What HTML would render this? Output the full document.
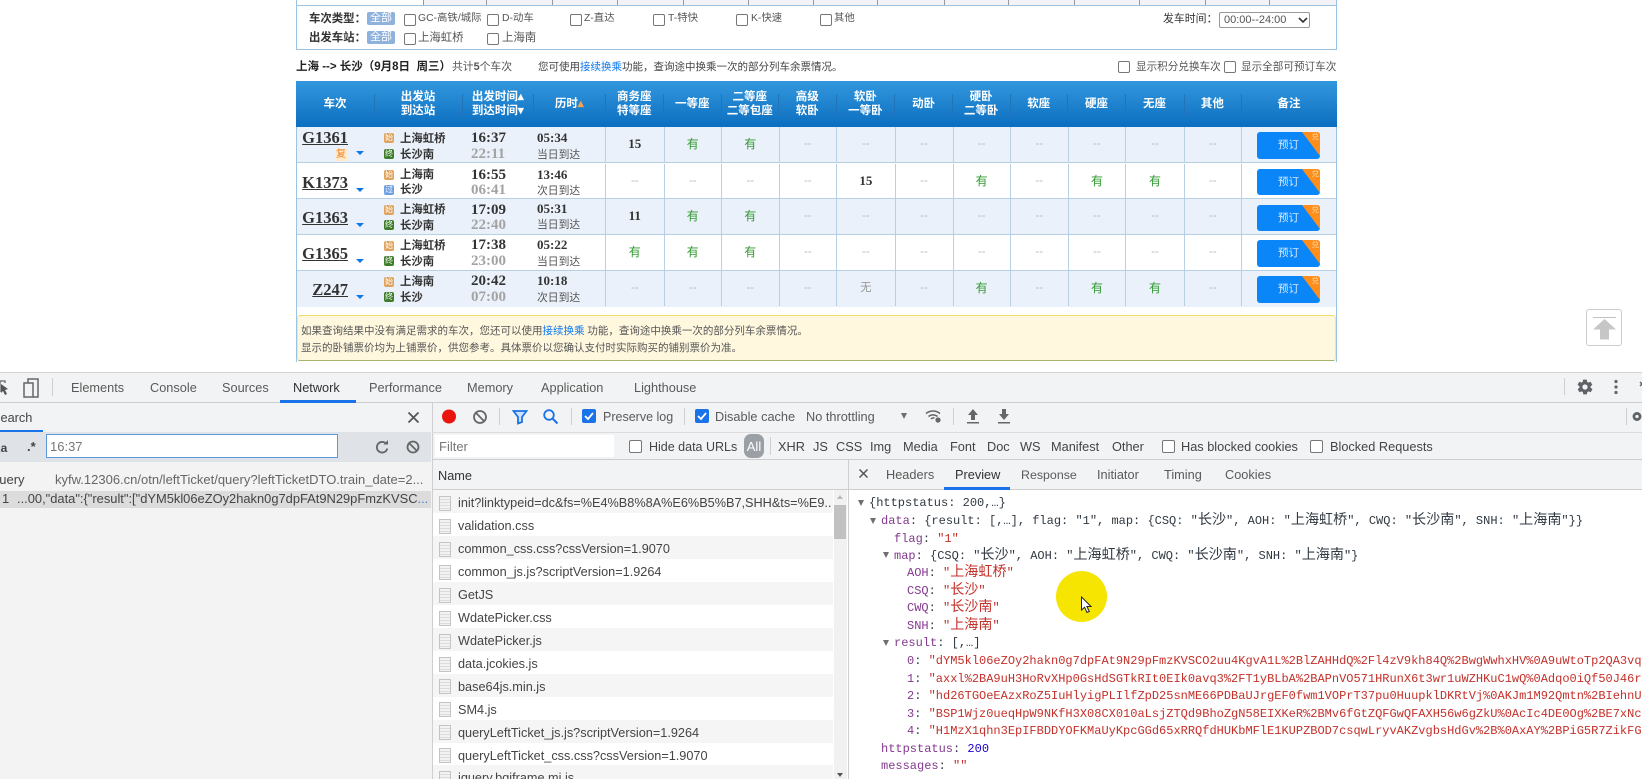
<!DOCTYPE html>
<html lang="zh-CN">
<head>
<meta charset="utf-8">
<title>12306 DevTools</title>
<style>
html,body{margin:0;padding:0;width:1642px;height:779px;overflow:hidden;background:#fff}
#w{position:relative;width:1642px;height:779px;overflow:hidden;filter:blur(.3px);font-family:"Liberation Sans","Noto Sans CJK SC",sans-serif;font-size:13px;color:#333}
#w div,#w span.t,#w svg.a{position:absolute}
.t{position:absolute;white-space:nowrap;line-height:16px}
.p{font-size:10.5px;color:#555}
.b{font-weight:bold;color:#333}
.cb{position:absolute;width:10px;height:10px;border:1px solid #777;border-radius:2px;background:#fff;box-sizing:content-box}
.tag{position:absolute;left:367px;width:28px;height:13px;line-height:13px;background:#8fb2dd;color:#fff;font-size:11px;text-align:center;border-radius:2px}
.h{top:81px;height:46px;color:#fff;font-weight:bold;font-size:11.5px;line-height:14px;text-align:center;display:flex;align-items:center;justify-content:center}
.s{top:94px;width:1px;height:21px;background:#2274b8}
.r{left:296px;width:1041px;height:35.7px;box-sizing:border-box;border-bottom:1px solid #b8d0e4}
.z{background:#ebf1fa}
.n{font:bold 16.5px/20px "Liberation Serif",serif;text-decoration:underline;color:#333;right:989px;top:9px;white-space:nowrap}
.tr{left:60px;top:24px;width:0;height:0;border-left:4px solid transparent;border-right:4px solid transparent;border-top:4.5px solid #0a78e0}
.ic{left:88px;width:10px;height:10px;border-radius:2px;color:#fff;font-size:8px;line-height:10px;text-align:center}
.o{background:#dfa35e}.g{background:#3f7d2c}.u{background:#6e9fe2}
.st{left:104px;font-size:11.4px;font-weight:bold;color:#333;white-space:nowrap;line-height:16px}
.tm{left:175px;font:bold 15px/16px "Liberation Serif",serif;color:#333}
.ar{color:#a3a3a3}
.du{left:241px;top:3px;font:bold 13px/16px "Liberation Serif",serif;color:#333}
.da{left:241px;top:19.5px;font-size:10.8px;line-height:16px;color:#555;white-space:nowrap}
.c{top:0;height:34.7px;line-height:34.7px;text-align:center;border-left:1px solid #b8d0e4;box-sizing:border-box;font-size:11.5px;color:#bbb}
.c1{left:309px;width:58.6px}.c2{left:367.6px;width:57.4px}.c3{left:425px;width:57.6px}.c4{left:482.6px;width:57.4px}.c5{left:540px;width:58.7px}.c6{left:598.7px;width:57.8px}.c7{left:656.5px;width:57.3px}.c8{left:713.8px;width:57.8px}.c9{left:771.6px;width:57.8px}.c10{left:829.4px;width:58.3px}.c11{left:887.7px;width:57.3px}.c12{left:945px;width:96px}
.y{color:#2f9a2f;font-size:12px}
.v{color:#333;font:bold 13px/34.7px "Liberation Serif",serif}
.btn{left:15px;top:5.3px;width:63px;height:26.4px;background:#0a86f8;border-radius:3px;color:#d8ebff;font-size:10.5px;line-height:27px;text-align:center;overflow:hidden}
.tri{right:0;top:0;width:0;height:0;border-top:24px solid #ff8f1a;border-left:18px solid transparent}
.dui{right:1px;top:-1px;font-size:7.5px;line-height:11px;color:#ffd9a8}
.d{color:#5a5a5a;font-size:12.75px}
.ln{height:1px;background:#cdcdcd}
.vs{width:1px;background:#cfcfcf}
.row{left:433px;width:400px;height:23px}
.gr{background:#f5f5f5}
.doc{left:439px;width:10px;height:13px;border:1px solid #c4c4c4;background:repeating-linear-gradient(#f2f2f2 0 2px,#dcdcdc 2px 3px)}
.nm{left:458px;color:#444;font-size:12.7px;white-space:nowrap;line-height:16px;overflow:hidden}
#pv{font:12px/17.6px "Liberation Mono",monospace;color:#303942}
#pv .l{white-space:nowrap;height:18px;line-height:18px;width:800px;overflow:hidden}
.k{color:#84398f}.q{color:#c4302a}.m{color:#1c00cf}
.j{font:14.1px/1 "Noto Sans CJK SC",sans-serif}
.ti{width:0;height:0;border-left:3.5px solid transparent;border-right:3.5px solid transparent;border-top:6px solid #6e6e6e}
</style>
</head>
<body>
<div id="w">

<!-- top filter -->
<div style="left:423px;top:0;width:914px;height:5px;background:#f1f3f6"></div>
<div class="vs" style="left:423px;top:0;height:5px;background:#999"></div>
<div class="vs" style="left:486px;top:0;height:5px;background:#999"></div>
<div class="vs" style="left:552px;top:0;height:5px;background:#999"></div>
<div class="vs" style="left:617px;top:0;height:5px;background:#999"></div>
<div class="vs" style="left:683px;top:0;height:5px;background:#999"></div>
<div class="vs" style="left:748px;top:0;height:5px;background:#999"></div>
<div class="vs" style="left:813px;top:0;height:5px;background:#999"></div>
<div class="vs" style="left:877px;top:0;height:5px;background:#999"></div>
<div class="vs" style="left:944px;top:0;height:5px;background:#999"></div>
<div class="vs" style="left:1008px;top:0;height:5px;background:#999"></div>
<div class="vs" style="left:1074px;top:0;height:5px;background:#999"></div>
<div class="vs" style="left:1139px;top:0;height:5px;background:#999"></div>
<div class="vs" style="left:1205px;top:0;height:5px;background:#999"></div>
<div class="vs" style="left:1269px;top:0;height:5px;background:#999"></div>
<div style="left:296px;top:5px;width:1041px;height:45px;box-sizing:border-box;border:1px solid #9cc3e2;background:#fff"></div>
<div style="left:296px;top:0;width:1px;height:6px;background:#9cc3e2"></div>
<div style="left:1336px;top:0;width:1px;height:6px;background:#9cc3e2"></div>

<span class="t p b" style="left:309px;top:11px;color:#333;font-size:11.4px">车次类型：</span>
<span class="t p b" style="left:309px;top:30px;color:#333;font-size:11.4px">出发车站：</span>
<div class="tag" style="top:12px">全部</div>
<div class="tag" style="top:31px">全部</div>
<span class="cb" style="left:404px;top:14px"></span><span class="t p" style="left:418px;top:11px;font-size:10.4px">GC-高铁/城际</span>
<span class="cb" style="left:487px;top:14px"></span><span class="t p" style="left:502px;top:11px;font-size:10.4px">D-动车</span>
<span class="cb" style="left:570px;top:14px"></span><span class="t p" style="left:584px;top:11px;font-size:10.4px">Z-直达</span>
<span class="cb" style="left:653px;top:14px"></span><span class="t p" style="left:668px;top:11px;font-size:10.4px">T-特快</span>
<span class="cb" style="left:736px;top:14px"></span><span class="t p" style="left:751px;top:11px;font-size:10.4px">K-快速</span>
<span class="cb" style="left:820px;top:14px"></span><span class="t p" style="left:834px;top:11px;font-size:10.4px">其他</span>
<span class="cb" style="left:404px;top:33px"></span><span class="t p" style="left:418px;top:30px;font-size:11.4px">上海虹桥</span>
<span class="cb" style="left:487px;top:33px"></span><span class="t p" style="left:502px;top:30px;font-size:11.4px">上海南</span>
<span class="t p" style="left:1163px;top:11px;color:#333;font-size:10.9px">发车时间：</span>
<div style="left:1219px;top:12px;width:91px;height:16px;box-sizing:border-box;border:1px solid #999;border-radius:2px;background:#fff;font-size:11px;line-height:14px;color:#555;padding-left:4px">00:00--24:00</div>
<svg class="a" style="left:1298px;top:17px" width="10" height="7"><path d="M1 1l4 4 4-4" fill="none" stroke="#333" stroke-width="1.6"/></svg>

<!-- summary -->
<span class="t p" style="left:296px;top:59px;color:#222;font-weight:bold;font-size:11.5px">上海 --&gt; 长沙（9月8日&nbsp; 周三）</span>
<span class="t p" style="left:452px;top:59px;font-size:10.8px">共计<b>5</b>个车次</span>
<span class="t p" style="left:538px;top:59px;color:#444">您可使用<span style="color:#0a78f0">接续换乘</span>功能，查询途中换乘一次的部分列车余票情况。</span>
<span class="cb" style="left:1118px;top:61px"></span><span class="t p" style="left:1136px;top:59px;font-size:10.6px">显示积分兑换车次</span>
<span class="cb" style="left:1224px;top:61px"></span><span class="t p" style="left:1241px;top:59px;font-size:10.6px">显示全部可预订车次</span>

<!-- table header -->
<div style="left:296px;top:81px;width:1041px;height:46px;background:linear-gradient(#3297de,#0c6ebf)"></div>
<div class="h" style="left:296px;width:78px">车次</div>
<div class="h" style="left:374px;width:88px">出发站<br>到达站</div>
<div class="h" style="left:462px;width:71.6px">出发时间▴<br>到达时间▾</div>
<div class="h" style="left:533.6px;width:71.4px">历时<span style="color:#f5a34c">▴</span></div>
<div class="h" style="left:605px;width:58.6px">商务座<br>特等座</div>
<div class="h" style="left:663.6px;width:57.4px">一等座</div>
<div class="h" style="left:721px;width:57.6px">二等座<br>二等包座</div>
<div class="h" style="left:778.6px;width:57.4px">高级<br>软卧</div>
<div class="h" style="left:836px;width:58.7px">软卧<br>一等卧</div>
<div class="h" style="left:894.7px;width:57.8px">动卧</div>
<div class="h" style="left:952.5px;width:57.3px">硬卧<br>二等卧</div>
<div class="h" style="left:1009.8px;width:57.8px">软座</div>
<div class="h" style="left:1067.6px;width:57.8px">硬座</div>
<div class="h" style="left:1125.4px;width:58.3px">无座</div>
<div class="h" style="left:1183.7px;width:57.3px">其他</div>
<div class="h" style="left:1241px;width:96px">备注</div>
<div class="s" style="left:374px"></div><div class="s" style="left:462px"></div><div class="s" style="left:533px"></div><div class="s" style="left:605px"></div><div class="s" style="left:663px"></div><div class="s" style="left:721px"></div><div class="s" style="left:778px"></div><div class="s" style="left:836px"></div><div class="s" style="left:894px"></div><div class="s" style="left:952px"></div><div class="s" style="left:1010px"></div><div class="s" style="left:1067px"></div><div class="s" style="left:1125px"></div><div class="s" style="left:1184px"></div><div class="s" style="left:1241px"></div>

<!-- rows -->
<div class="r z" style="top:127px">
<div class="n" style="top:1px">G1361</div>
<div style="left:39.5px;top:22px;width:11px;height:12px;background:#ffe9c8;color:#f0862a;font-size:10px;line-height:12px;text-align:center">复</div>
<div class="tr"></div>
<div class="ic o" style="top:6px">始</div><div class="st" style="top:4px">上海虹桥</div>
<div class="ic g" style="top:22px">终</div><div class="st" style="top:19.5px">长沙南</div>
<div class="tm" style="top:3px">16:37</div><div class="tm ar" style="top:18.5px">22:11</div>
<div class="du">05:34</div><div class="da">当日到达</div>
<div class="c c1 v">15</div><div class="c c2 y">有</div><div class="c c3 y">有</div><div class="c c4">--</div><div class="c c5">--</div><div class="c c6">--</div><div class="c c7">--</div><div class="c c8">--</div><div class="c c9">--</div><div class="c c10">--</div><div class="c c11">--</div>
<div class="c c12"><div class="btn">预订<div class="tri"></div><div class="dui">兑</div></div></div>
</div>

<div class="r" style="top:163.7px">
<div class="n">K1373</div><div class="tr"></div>
<div class="ic o" style="top:6px">始</div><div class="st" style="top:3px">上海南</div>
<div class="ic u" style="top:21px">过</div><div class="st" style="top:18.5px">长沙</div>
<div class="tm" style="top:3.5px">16:55</div><div class="tm ar" style="top:18px">06:41</div>
<div class="du">13:46</div><div class="da">次日到达</div>
<div class="c c1">--</div><div class="c c2">--</div><div class="c c3">--</div><div class="c c4">--</div><div class="c c5 v">15</div><div class="c c6">--</div><div class="c c7 y">有</div><div class="c c8">--</div><div class="c c9 y">有</div><div class="c c10 y">有</div><div class="c c11">--</div>
<div class="c c12"><div class="btn">预订<div class="tri"></div><div class="dui">兑</div></div></div>
</div>

<div class="r z" style="top:199.4px">
<div class="n">G1363</div><div class="tr"></div>
<div class="ic o" style="top:6px">始</div><div class="st" style="top:3px">上海虹桥</div>
<div class="ic g" style="top:21px">终</div><div class="st" style="top:18.5px">长沙南</div>
<div class="tm" style="top:2.5px">17:09</div><div class="tm ar" style="top:18px">22:40</div>
<div class="du" style="top:1.5px">05:31</div><div class="da" style="top:18px">当日到达</div>
<div class="c c1 v">11</div><div class="c c2 y">有</div><div class="c c3 y">有</div><div class="c c4">--</div><div class="c c5">--</div><div class="c c6">--</div><div class="c c7">--</div><div class="c c8">--</div><div class="c c9">--</div><div class="c c10">--</div><div class="c c11">--</div>
<div class="c c12"><div class="btn">预订<div class="tri"></div><div class="dui">兑</div></div></div>
</div>

<div class="r" style="top:235.1px">
<div class="n">G1365</div><div class="tr"></div>
<div class="ic o" style="top:6px">始</div><div class="st" style="top:3px">上海虹桥</div>
<div class="ic g" style="top:21px">终</div><div class="st" style="top:18.5px">长沙南</div>
<div class="tm" style="top:2px">17:38</div><div class="tm ar" style="top:17.5px">23:00</div>
<div class="du" style="top:2px">05:22</div><div class="da" style="top:18.5px">当日到达</div>
<div class="c c1 y">有</div><div class="c c2 y">有</div><div class="c c3 y">有</div><div class="c c4">--</div><div class="c c5">--</div><div class="c c6">--</div><div class="c c7">--</div><div class="c c8">--</div><div class="c c9">--</div><div class="c c10">--</div><div class="c c11">--</div>
<div class="c c12"><div class="btn">预订<div class="tri"></div><div class="dui">兑</div></div></div>
</div>

<div class="r z" style="top:271px;border-bottom:0">
<div class="n">Z247</div><div class="tr"></div>
<div class="ic o" style="top:6px">始</div><div class="st" style="top:3px">上海南</div>
<div class="ic g" style="top:21px">终</div><div class="st" style="top:18.5px">长沙</div>
<div class="tm" style="top:2px">20:42</div><div class="tm ar" style="top:17.5px">07:00</div>
<div class="du" style="top:2px">10:18</div><div class="da" style="top:18.5px">次日到达</div>
<div class="c c1">--</div><div class="c c2">--</div><div class="c c3">--</div><div class="c c4">--</div><div class="c c5" style="color:#999">无</div><div class="c c6">--</div><div class="c c7 y">有</div><div class="c c8">--</div><div class="c c9 y">有</div><div class="c c10 y">有</div><div class="c c11">--</div>
<div class="c c12"><div class="btn">预订<div class="tri"></div><div class="dui">兑</div></div></div>
</div>

<!-- table sides -->
<div style="left:296px;top:127px;width:1px;height:235px;background:#9cc3e2"></div>
<div style="left:1336px;top:127px;width:1px;height:235px;background:#9cc3e2"></div>

<!-- notice -->
<div style="left:297px;top:315px;width:1039px;height:46px;box-sizing:border-box;background:#fff8df;border:1px solid #f4e89c;border-top:1.5px solid #f3dc6e;border-bottom:1.5px solid #a4b56a;border-radius:3px"></div>
<span class="t p" style="left:301px;top:323px">如果查询结果中没有满足需求的车次，您还可以使用<span style="color:#0a78f0">接续换乘</span> 功能，查询途中换乘一次的部分列车余票情况。</span>
<span class="t p" style="left:301px;top:340px">显示的卧铺票价均为上铺票价，供您参考。具体票价以您确认支付时实际购买的铺别票价为准。</span>

<!-- back to top -->
<div style="left:1586px;top:309px;width:36px;height:37px;box-sizing:border-box;border:1px solid #ccc;border-radius:3px;background:#fff"></div>
<svg class="a" style="left:1586px;top:309px" width="36" height="37"><rect x="7" y="8" width="23" height="1" fill="#c2c2c2"/><path d="M18.5 10L30 20.500H23V30.500H14V20.500H7Z" fill="#c6c6c6"/></svg>

<!-- devtools -->
<div style="left:0;top:372px;width:1642px;height:407px;background:#f1f3f4"></div>
<div class="ln" style="left:0;top:372px;width:1642px;background:#d2d2d2"></div>
<div class="ln" style="left:0;top:402px;width:1642px"></div>
<svg class="a" style="left:0;top:378px" width="42" height="20"><path d="M-2 3H5V5M0 3V14" fill="none" stroke="#666" stroke-width="1.3"/><path d="M1 6l7 5-3 1 2 4-2 1-2-4-2 2z" fill="#555"/><rect x="24" y="5" width="9" height="14" fill="none" stroke="#666" stroke-width="1.5"/><path d="M28 5V1H38V19H33" fill="none" stroke="#666" stroke-width="1.5"/></svg>
<div class="vs" style="left:52px;top:378px;height:18px"></div>
<span class="t d" style="left:71px;top:380px">Elements</span>
<span class="t d" style="left:150px;top:380px">Console</span>
<span class="t d" style="left:222px;top:380px">Sources</span>
<span class="t d" style="left:293px;top:380px;color:#333">Network</span>
<span class="t d" style="left:369px;top:380px">Performance</span>
<span class="t d" style="left:467px;top:380px">Memory</span>
<span class="t d" style="left:541px;top:380px">Application</span>
<span class="t d" style="left:634px;top:380px">Lighthouse</span>
<div style="left:280px;top:400px;width:76px;height:2.5px;background:#1a73e8"></div>
<div class="vs" style="left:1564px;top:378px;height:17px"></div>
<svg class="a" style="left:1576px;top:378px" width="18" height="18" viewBox="0 0 24 24"><path fill="#5f6368" d="M19.4 13c.1-.3.1-.7.1-1s0-.7-.1-1l2.1-1.6c.2-.2.2-.4.1-.6l-2-3.5c-.1-.2-.4-.3-.6-.2l-2.5 1c-.5-.4-1.1-.7-1.700-1l-.4-2.600c0-.3-.2-.4-.5-.4h-4c-.3 0-.5.2-.5.4l-.4 2.600c-.6.3-1.200.6-1.700 1l-2.500-1c-.2-.1-.5 0-.6.2l-2 3.500c-.1.2-.1.5.1.6L4.600 11c0 .3-.1.7-.1 1s0 .7.1 1l-2.100 1.600c-.2.2-.2.4-.1.6l2 3.500c.1.2.4.3.6.2l2.500-1c.5.4 1.100.7 1.700 1l.4 2.600c0 .3.2.4.5.4h4c.3 0 .5-.2.5-.4l.4-2.600c.6-.3 1.200-.6 1.700-1l2.500 1c.2.1.5 0 .6-.2l2-3.500c.1-.2.1-.5-.1-.6zM12 15.500a3.500 3.500 0 1 1 0-7 3.500 3.500 0 0 1 0 7z"/></svg>
<svg class="a" style="left:1612px;top:379px" width="30" height="16"><circle cx="4" cy="2.500" r="1.600" fill="#5f6368"/><circle cx="4" cy="8" r="1.600" fill="#5f6368"/><circle cx="4" cy="13.500" r="1.600" fill="#5f6368"/><path d="M28 3l4 4m0-4l-4 4" stroke="#5f6368" stroke-width="1.500"/></svg>

<!-- search pane -->
<div style="left:0;top:403px;width:432px;height:376px;background:#f3f3f3"></div>
<div style="left:0;top:403px;width:432px;height:29px;background:#f1f3f4"></div>
<span class="t d" style="left:-8px;top:410px;color:#444">Search</span>
<div style="left:0;top:430px;width:43px;height:2px;background:#1a73e8"></div>
<svg class="a" style="left:407px;top:411px" width="13" height="13"><path d="M1.500 1.500l10 10m0-10l-10 10" stroke="#555" stroke-width="1.800"/></svg>
<div style="left:0;top:432px;width:431px;height:29.500px;background:#dfe2e6"></div>
<span class="t" style="left:-8px;top:440px;font-weight:bold;color:#444;font-size:12px">Aa</span>
<span class="t" style="left:27px;top:439px;color:#444;font-weight:bold">.*</span>
<div style="left:46px;top:434px;width:292px;height:24px;box-sizing:border-box;border:1.500px solid #5b9ad6;background:#fff"></div>
<span class="t" style="left:50px;top:439px;color:#777">16:37</span>
<svg class="a" style="left:375px;top:440px" width="14" height="14"><path d="M11.500 4.200A5.300 5.300 0 1 0 12.300 8.500" fill="none" stroke="#666" stroke-width="1.800"/><path d="M8.500 4.500H13V0z" fill="#666"/></svg>
<svg class="a" style="left:406px;top:440px" width="14" height="14"><circle cx="7" cy="7" r="5.500" fill="none" stroke="#666" stroke-width="1.800"/><path d="M3 3l8 8" stroke="#666" stroke-width="1.800"/></svg>
<span class="t" style="left:-8px;top:472px;color:#444">query</span>
<span class="t" style="left:55px;top:472px;color:#666">kyfw.12306.cn/otn/leftTicket/query?leftTicketDTO.train_date=2...</span>
<div style="left:0;top:491px;width:431px;height:17px;background:#dcdcdc"></div>
<span class="t" style="left:2px;top:491px;color:#444">1</span>
<span class="t" style="left:17px;top:491px;color:#444;font-size:12.9px">...00,"data":{"result":["dYM5kl06eZOy2hakn0g7dpFAt9N29pFmzKVSC<span style="color:#4a7fd6">...</span></span>
<div class="vs" style="left:431.500px;top:402px;height:377px"></div>

<!-- network toolbar -->
<svg class="a" style="left:441px;top:408px" width="16" height="17"><circle cx="8" cy="8.500" r="7" fill="#e8150f"/></svg>
<svg class="a" style="left:472px;top:409px" width="16" height="16"><circle cx="8" cy="8" r="6" fill="none" stroke="#666" stroke-width="1.800"/><path d="M3.800 3.800l8.400 8.400" stroke="#666" stroke-width="1.800"/></svg>
<div class="vs" style="left:499px;top:408px;height:17px"></div>
<svg class="a" style="left:512px;top:409px" width="16" height="16"><path d="M1.500 2H14.500L10 8V13L6 14.500V8Z" fill="#cfe0fa" stroke="#1a73e8" stroke-width="1.800"/></svg>
<svg class="a" style="left:542px;top:408px" width="17" height="17"><circle cx="7" cy="7" r="4.800" fill="none" stroke="#1a73e8" stroke-width="1.800"/><path d="M10.500 10.500l5 5" stroke="#1a73e8" stroke-width="2"/></svg>
<div class="vs" style="left:571px;top:408px;height:17px"></div>
<svg class="a" style="left:582px;top:409px" width="14" height="14"><rect width="14" height="14" rx="2" fill="#1a73e8"/><path d="M3 7l3 3 5-6" fill="none" stroke="#fff" stroke-width="1.800"/></svg>
<span class="t d" style="left:603px;top:409px;font-size:12.5px">Preserve log</span>
<div class="vs" style="left:684px;top:408px;height:17px"></div>
<svg class="a" style="left:695px;top:409px" width="14" height="14"><rect width="14" height="14" rx="2" fill="#1a73e8"/><path d="M3 7l3 3 5-6" fill="none" stroke="#fff" stroke-width="1.800"/></svg>
<span class="t d" style="left:715px;top:409px">Disable cache</span>
<span class="t d" style="left:806px;top:409px">No throttling</span>
<div class="ti" style="left:901px;top:413px"></div>
<svg class="a" style="left:925px;top:408px" width="18" height="16"><path d="M1 5.500a11 11 0 0 1 14 0M3.500 8.500a7 7 0 0 1 9 0M6 11a3.500 3.500 0 0 1 3.500-1" fill="none" stroke="#666" stroke-width="1.500"/><circle cx="13" cy="12" r="2.600" fill="#666"/></svg>
<div class="vs" style="left:953px;top:408px;height:17px"></div>
<svg class="a" style="left:967px;top:409px" width="12" height="15"><path d="M6 0L11 6H8V11H4V6H1ZM0 13H12V14.500H0Z" fill="#666"/></svg>
<svg class="a" style="left:998px;top:409px" width="12" height="15"><path d="M4 0H8V5H11L6 11L1 5H4ZM0 13H12V14.500H0Z" fill="#666"/></svg>
<div class="vs" style="left:1626px;top:408px;height:17px"></div>
<svg class="a" style="left:1632px;top:408px" width="10" height="17" viewBox="0 0 18 18"><circle cx="9" cy="9" r="5.500" fill="none" stroke="#5f6368" stroke-width="5"/></svg>
<div class="ln" style="left:432px;top:432px;width:1210px;background:#dcdcdc"></div>

<!-- filter bar -->
<div style="left:435px;top:435px;width:179px;height:22px;background:#fff"></div>
<span class="t" style="left:439px;top:439px;color:#777">Filter</span>
<span class="cb" style="left:629px;top:440px;width:11px;height:11px;background:#fff"></span>
<span class="t d" style="left:649px;top:439px;color:#444;font-size:12.5px">Hide data URLs</span>
<div style="left:744px;top:434px;width:20px;height:24px;background:#9aa0a6;border-radius:7px;color:#fff;text-align:center;line-height:25px;font-size:13px">All</div>
<div class="vs" style="left:770px;top:437px;height:18px"></div>
<span class="t d" style="left:778px;top:439px;color:#444">XHR</span>
<span class="t d" style="left:813px;top:439px;color:#444">JS</span>
<span class="t d" style="left:836px;top:439px;color:#444">CSS</span>
<span class="t d" style="left:870px;top:439px;color:#444">Img</span>
<span class="t d" style="left:903px;top:439px;color:#444">Media</span>
<span class="t d" style="left:950px;top:439px;color:#444">Font</span>
<span class="t d" style="left:987px;top:439px;color:#444">Doc</span>
<span class="t d" style="left:1020px;top:439px;color:#444">WS</span>
<span class="t d" style="left:1051px;top:439px;color:#444">Manifest</span>
<span class="t d" style="left:1112px;top:439px;color:#444">Other</span>
<span class="cb" style="left:1162px;top:440px;width:11px;height:11px"></span>
<span class="t d" style="left:1181px;top:439px;color:#444">Has blocked cookies</span>
<span class="cb" style="left:1310px;top:440px;width:11px;height:11px"></span>
<span class="t d" style="left:1330px;top:439px;color:#444">Blocked Requests</span>
<div class="ln" style="left:432px;top:459px;width:1210px"></div>

<!-- name header + details tabs -->
<span class="t d" style="left:438px;top:468px;color:#333">Name</span>
<div class="vs" style="left:848px;top:459px;height:320px"></div>
<div class="ln" style="left:432px;top:489px;width:1210px"></div>
<svg class="a" style="left:859px;top:469px" width="9" height="9"><path d="M.5.500l8 8m0-8l-8 8" stroke="#555" stroke-width="1.500"/></svg>
<span class="t d" style="left:886px;top:467px">Headers</span>
<span class="t d" style="left:955px;top:467px;color:#333">Preview</span>
<span class="t d" style="left:1021px;top:467px;font-size:12.4px">Response</span>
<span class="t d" style="left:1097px;top:467px">Initiator</span>
<span class="t d" style="left:1164px;top:467px">Timing</span>
<span class="t d" style="left:1225px;top:467px">Cookies</span>
<div style="left:944px;top:487px;width:66px;height:2.500px;background:#1a73e8"></div>

<!-- request list -->
<div style="left:433px;top:490px;width:415px;height:289px;background:#fff"></div>
<div class="row gr" style="top:490px"></div>
<div class="row gr" style="top:536px"></div>
<div class="row gr" style="top:582px"></div>
<div class="row gr" style="top:627.500px"></div>
<div class="row gr" style="top:673.500px"></div>
<div class="row gr" style="top:719.500px"></div>
<div class="row gr" style="top:765px;height:14px"></div>
<div class="doc" style="top:496px"></div><div class="nm" style="top:495px;width:374px">init?linktypeid=dc&amp;fs=%E4%B8%8A%E6%B5%B7,SHH&amp;ts=%E9...</div>
<div class="doc" style="top:519px"></div><div class="nm" style="top:518px">validation.css</div>
<div class="doc" style="top:542px"></div><div class="nm" style="top:541px">common_css.css?cssVersion=1.9070</div>
<div class="doc" style="top:565px"></div><div class="nm" style="top:564px">common_js.js?scriptVersion=1.9264</div>
<div class="doc" style="top:588px"></div><div class="nm" style="top:587px">GetJS</div>
<div class="doc" style="top:611px"></div><div class="nm" style="top:610px">WdatePicker.css</div>
<div class="doc" style="top:634px"></div><div class="nm" style="top:633px">WdatePicker.js</div>
<div class="doc" style="top:657px"></div><div class="nm" style="top:656px">data.jcokies.js</div>
<div class="doc" style="top:679px"></div><div class="nm" style="top:679px">base64js.min.js</div>
<div class="doc" style="top:702px"></div><div class="nm" style="top:702px">SM4.js</div>
<div class="doc" style="top:725px"></div><div class="nm" style="top:725px">queryLeftTicket_js.js?scriptVersion=1.9264</div>
<div class="doc" style="top:748px"></div><div class="nm" style="top:748px">queryLeftTicket_css.css?cssVersion=1.9070</div>
<div class="doc" style="top:771px"></div><div class="nm" style="top:770px">jquery.bgiframe.mi.js</div>
<div style="left:834px;top:490px;width:13px;height:289px;background:#f1f1f1"></div>
<div style="left:834px;top:505px;width:12px;height:34px;background:#c1c1c1"></div>
<svg class="a" style="left:836px;top:494px" width="8" height="6"><path d="M4 1l3 4H1z" fill="#bbb"/></svg>
<svg class="a" style="left:836px;top:772px" width="8" height="6"><path d="M4 5L7 1H1z" fill="#555"/></svg>

<!-- preview -->
<div style="left:849px;top:490px;width:793px;height:289px;background:#fff"></div>
<div id="pv" style="left:0;top:0;width:1642px;height:779px">
<div class="ti" style="left:858px;top:500px"></div>
<div class="l" style="left:869px;top:494px">{httpstatus: 200,…}</div>
<div class="ti" style="left:870px;top:518px"></div>
<div class="l" style="left:881px;top:512px"><span class="k">data</span>: {result: [,…], flag: "1", map: {CSQ: "<span class="j">长沙</span>", AOH: "<span class="j">上海虹桥</span>", CWQ: "<span class="j">长沙南</span>", SNH: "<span class="j">上海南</span>"}}</div>
<div class="l" style="left:894px;top:529.500px"><span class="k">flag</span>: <span class="q">"1"</span></div>
<div class="ti" style="left:883px;top:552px"></div>
<div class="l" style="left:894px;top:547px"><span class="k">map</span>: {CSQ: "<span class="j">长沙</span>", AOH: "<span class="j">上海虹桥</span>", CWQ: "<span class="j">长沙南</span>", SNH: "<span class="j">上海南</span>"}</div>
<div class="l" style="left:907px;top:564px"><span class="k">AOH</span>: <span class="q">"<span class="j">上海虹桥</span>"</span></div>
<div class="l" style="left:907px;top:581.500px"><span class="k">CSQ</span>: <span class="q">"<span class="j">长沙</span>"</span></div>
<div class="l" style="left:907px;top:599px"><span class="k">CWQ</span>: <span class="q">"<span class="j">长沙南</span>"</span></div>
<div class="l" style="left:907px;top:617px"><span class="k">SNH</span>: <span class="q">"<span class="j">上海南</span>"</span></div>
<div class="ti" style="left:883px;top:640px"></div>
<div class="l" style="left:894px;top:634px"><span class="k">result</span>: [,…]</div>
<div class="l" style="left:907px;top:652px"><span class="k">0</span>: <span class="q">"dYM5kl06eZOy2hakn0g7dpFAt9N29pFmzKVSCO2uu4KgvA1L%2BlZAHHdQ%2Fl4zV9kh84Q%2BwgWwhxHV%0A9uWtoTp2QA3vq</span></div>
<div class="l" style="left:907px;top:669.500px"><span class="k">1</span>: <span class="q">"axxl%2BA9uH3HoRvXHp0GsHdSGTkRIt0EIk0avq3%2FT1yBLbA%2BAPnVO571HRunX6t3wr1uWZHKuC1wQ%0Adqo0iQf50J46r</span></div>
<div class="l" style="left:907px;top:687px"><span class="k">2</span>: <span class="q">"hd26TGOeEAzxRoZ5IuHlyigPLIlfZpD25snME66PDBaUJrgEF0fwm1VOPrT37pu0HuupklDKRtVj%0AKJm1M92Qmtn%2BIehnU</span></div>
<div class="l" style="left:907px;top:704.500px"><span class="k">3</span>: <span class="q">"BSP1Wjz0ueqHpW9NKfH3X08CX010aLsjZTQd9BhoZgN58EIXKeR%2BMv6fGtZQFGwQFAXH56w6gZkU%0AcIc4DE0Og%2BE7xNc</span></div>
<div class="l" style="left:907px;top:722px"><span class="k">4</span>: <span class="q">"H1MzX1qhn3EpIFBDDYOFKMaUyKpcGGd65xRRQfdHUKbMFlE1KUPZBOD7csqwLryvAKZvgbsHdGv%2B%0AxAY%2BPiG5R7ZikFG</span></div>
<div class="l" style="left:881px;top:739.500px"><span class="k">httpstatus</span>: <span class="m">200</span></div>
<div class="l" style="left:881px;top:757px"><span class="k">messages</span>: <span class="q">""</span></div>
</div>

<!-- mouse highlight -->
<div style="left:1056px;top:571px;width:51px;height:51px;border-radius:50%;background:#f5e500"></div>
<svg class="a" style="left:1080px;top:596px" width="13" height="18"><path d="M1.500 1V14L4.600 11.300L7 16.500L9.300 15.500L6.900 10.500H11Z" fill="#fff" stroke="#222" stroke-width="1"/></svg>

</div>
</body>
</html>
